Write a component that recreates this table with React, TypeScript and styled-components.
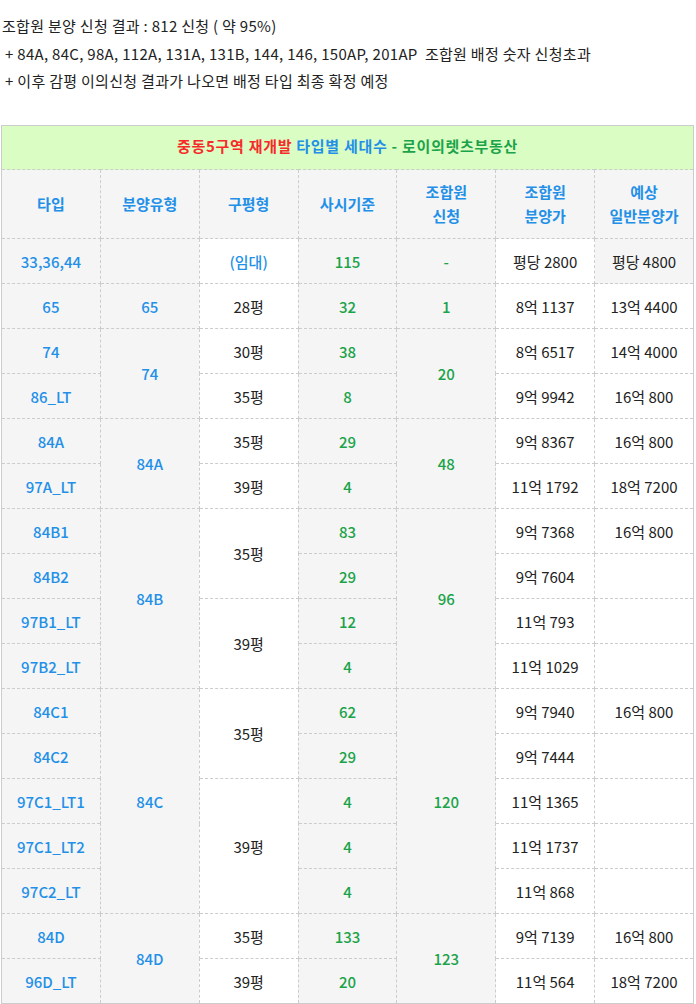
import React from "react";
import styled, { createGlobalStyle } from "styled-components";

const GlobalStyle = createGlobalStyle`
  html, body { margin: 0; padding: 0; background: #ffffff; }
  body {
    font-family: "Noto Sans CJK KR", "Noto Sans", sans-serif;
    color: #222222;
  }
`;

type Tone = "blue" | "green" | "dark";
type Bg = "gray" | "white";

const toneColor: Record<Tone, string> = {
  blue: "#2390e8",
  green: "#1ba34a",
  dark: "#222222",
};

const Page = styled.div`
  padding: 12px 2px 0 1px;
  width: 692px;
`;

const Notes = styled.div`
  padding-left: 1px;
  font-size: 15px;
  letter-spacing: 0.3px;
  line-height: 27.5px;
  color: #222;
  margin-bottom: 30.5px;
`;

const NoteLine = styled.div<{ $indent?: boolean }>`
  padding-left: ${(p) => (p.$indent ? "3px" : "0")};
  white-space: pre;
`;

const Table = styled.table`
  width: 692px;
  border-collapse: collapse;
  table-layout: fixed;
  border: 1px solid #cccccc;
  font-size: 15px;
`;

const TitleCell = styled.td`
  height: 39px;
  background: #dafdc3;
  text-align: center;
  font-weight: 600;
  letter-spacing: 0.7px;
  line-height: 20px;
  border-bottom: 1px dashed #cccccc;
  padding: 0 0 4px;
`;

const Span = styled.span<{ $tone: "red" | "blue" | "green" }>`
  color: ${(p) =>
    p.$tone === "red" ? "#f62a2a" : p.$tone === "blue" ? "#2390e8" : "#1ba34a"};
`;

const HeadCell = styled.th`
  height: 68px;
  background: #f5f5f5;
  color: #2390e8;
  font-weight: 600;
  line-height: 24px;
  border: 1px dashed #cccccc;
  padding: 0;
`;

const Cell = styled.td<{ $tone: Tone; $bg: Bg }>`
  height: 44px;
  padding: 0;
  text-align: center;
  vertical-align: middle;
  border: 1px dashed #cccccc;
  background: ${(p) => (p.$bg === "gray" ? "#f5f5f5" : "#ffffff")};
  color: ${(p) => toneColor[p.$tone]};
  font-weight: ${(p) => (p.$tone === "dark" ? 400 : 500)};
`;

const colTone: Tone[] = ["blue", "blue", "dark", "green", "green", "dark", "dark"];
const colBg: Bg[] = ["gray", "gray", "white", "gray", "gray", "white", "white"];

type C = { c: number; t: string; rs?: number; tone?: Tone; bg?: Bg };

const rows: C[][] = [
  [
    { c: 0, t: "33,36,44" },
    { c: 1, t: "" },
    { c: 2, t: "(임대)", tone: "blue" },
    { c: 3, t: "115" },
    { c: 4, t: "-" },
    { c: 5, t: "평당 2800" },
    { c: 6, t: "평당 4800", bg: "gray" },
  ],
  [
    { c: 0, t: "65" },
    { c: 1, t: "65" },
    { c: 2, t: "28평" },
    { c: 3, t: "32" },
    { c: 4, t: "1" },
    { c: 5, t: "8억 1137" },
    { c: 6, t: "13억 4400" },
  ],
  [
    { c: 0, t: "74" },
    { c: 1, t: "74", rs: 2 },
    { c: 2, t: "30평" },
    { c: 3, t: "38" },
    { c: 4, t: "20", rs: 2 },
    { c: 5, t: "8억 6517" },
    { c: 6, t: "14억 4000" },
  ],
  [
    { c: 0, t: "86_LT" },
    { c: 2, t: "35평" },
    { c: 3, t: "8" },
    { c: 5, t: "9억 9942" },
    { c: 6, t: "16억 800" },
  ],
  [
    { c: 0, t: "84A" },
    { c: 1, t: "84A", rs: 2 },
    { c: 2, t: "35평" },
    { c: 3, t: "29" },
    { c: 4, t: "48", rs: 2 },
    { c: 5, t: "9억 8367" },
    { c: 6, t: "16억 800" },
  ],
  [
    { c: 0, t: "97A_LT" },
    { c: 2, t: "39평" },
    { c: 3, t: "4" },
    { c: 5, t: "11억 1792" },
    { c: 6, t: "18억 7200" },
  ],
  [
    { c: 0, t: "84B1" },
    { c: 1, t: "84B", rs: 4 },
    { c: 2, t: "35평", rs: 2 },
    { c: 3, t: "83" },
    { c: 4, t: "96", rs: 4 },
    { c: 5, t: "9억 7368" },
    { c: 6, t: "16억 800" },
  ],
  [
    { c: 0, t: "84B2" },
    { c: 3, t: "29" },
    { c: 5, t: "9억 7604" },
    { c: 6, t: "" },
  ],
  [
    { c: 0, t: "97B1_LT" },
    { c: 2, t: "39평", rs: 2 },
    { c: 3, t: "12" },
    { c: 5, t: "11억 793" },
    { c: 6, t: "" },
  ],
  [
    { c: 0, t: "97B2_LT" },
    { c: 3, t: "4" },
    { c: 5, t: "11억 1029" },
    { c: 6, t: "" },
  ],
  [
    { c: 0, t: "84C1" },
    { c: 1, t: "84C", rs: 5 },
    { c: 2, t: "35평", rs: 2 },
    { c: 3, t: "62" },
    { c: 4, t: "120", rs: 5 },
    { c: 5, t: "9억 7940" },
    { c: 6, t: "16억 800" },
  ],
  [
    { c: 0, t: "84C2" },
    { c: 3, t: "29" },
    { c: 5, t: "9억 7444" },
    { c: 6, t: "" },
  ],
  [
    { c: 0, t: "97C1_LT1" },
    { c: 2, t: "39평", rs: 3 },
    { c: 3, t: "4" },
    { c: 5, t: "11억 1365" },
    { c: 6, t: "" },
  ],
  [
    { c: 0, t: "97C1_LT2" },
    { c: 3, t: "4" },
    { c: 5, t: "11억 1737" },
    { c: 6, t: "" },
  ],
  [
    { c: 0, t: "97C2_LT" },
    { c: 3, t: "4" },
    { c: 5, t: "11억 868" },
    { c: 6, t: "" },
  ],
  [
    { c: 0, t: "84D" },
    { c: 1, t: "84D", rs: 2 },
    { c: 2, t: "35평" },
    { c: 3, t: "133" },
    { c: 4, t: "123", rs: 2 },
    { c: 5, t: "9억 7139" },
    { c: 6, t: "16억 800" },
  ],
  [
    { c: 0, t: "96D_LT" },
    { c: 2, t: "39평" },
    { c: 3, t: "20" },
    { c: 5, t: "11억 564" },
    { c: 6, t: "18억 7200" },
  ],
];

const headers: string[][] = [
  ["타입"],
  ["분양유형"],
  ["구평형"],
  ["사시기준"],
  ["조합원", "신청"],
  ["조합원", "분양가"],
  ["예상", "일반분양가"],
];

export default function App() {
  return (
    <>
      <GlobalStyle />
      <Page>
        <Notes>
          <NoteLine>조합원 분양 신청 결과 : 812 신청 ( 약 95%)</NoteLine>
          <NoteLine $indent>
            + 84A, 84C, 98A, 112A, 131A, 131B, 144, 146, 150AP, 201AP  조합원 배정 숫자 신청초과
          </NoteLine>
          <NoteLine $indent>+ 이후 감평 이의신청 결과가 나오면 배정 타입 최종 확정 예정</NoteLine>
        </Notes>
        <Table>
          <colgroup>
            {headers.map((_, i) => (
              <col key={i} style={{ width: `${692 / 7}px` }} />
            ))}
          </colgroup>
          <tbody>
            <tr>
              <TitleCell colSpan={7}>
                <Span $tone="red">중동5구역 재개발</Span>{" "}
                <Span $tone="blue">타입별 세대수</Span>{" "}
                <Span $tone="green">- 로이의렛츠부동산</Span>
              </TitleCell>
            </tr>
            <tr>
              {headers.map((h, i) => (
                <HeadCell key={i}>
                  {h.map((line, j) => (
                    <React.Fragment key={j}>
                      {j > 0 && <br />}
                      {line}
                    </React.Fragment>
                  ))}
                </HeadCell>
              ))}
            </tr>
            {rows.map((row, ri) => (
              <tr key={ri}>
                {row.map((cell) => (
                  <Cell
                    key={cell.c}
                    rowSpan={cell.rs}
                    $tone={cell.tone ?? colTone[cell.c]}
                    $bg={cell.bg ?? colBg[cell.c]}
                  >
                    {cell.t}
                  </Cell>
                ))}
              </tr>
            ))}
          </tbody>
        </Table>
      </Page>
    </>
  );
}
